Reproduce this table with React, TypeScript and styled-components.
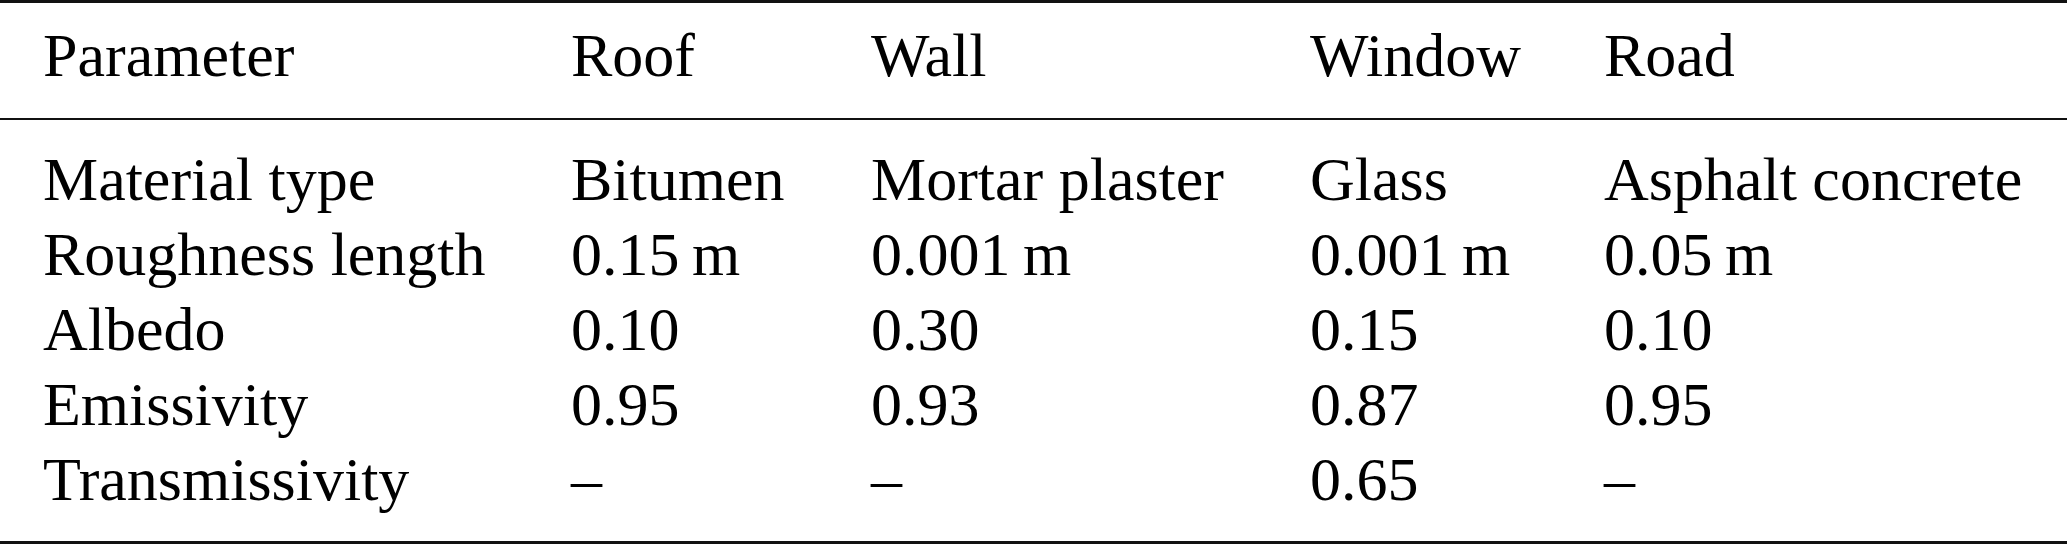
import React from "react";
import styled, { createGlobalStyle } from "styled-components";

const GlobalStyle = createGlobalStyle`
  html, body {
    margin: 0;
    padding: 0;
    background: #ffffff;
  }
`;

type rowType = {
  label: string;
  values: Array<string>;
};

const headers = ["Parameter", "Roof", "Wall", "Window", "Road"];

const rows: Array<rowType> = [
  { label: "Material type", values: ["Bitumen", "Mortar plaster", "Glass", "Asphalt concrete"] },
  { label: "Roughness length", values: ["0.15\u2009m", "0.001\u2009m", "0.001\u2009m", "0.05\u2009m"] },
  { label: "Albedo", values: ["0.10", "0.30", "0.15", "0.10"] },
  { label: "Emissivity", values: ["0.95", "0.93", "0.87", "0.95"] },
  { label: "Transmissivity", values: ["\u2013", "\u2013", "0.65", "\u2013"] },
];

const App = () => {
  return (
    <>
      <GlobalStyle />
      <StyledTable>
        <HeadSection>
          <Row>
            {headers.map((h) => (
              <Cell key={h}>{h}</Cell>
            ))}
          </Row>
        </HeadSection>
        <BodySection>
          {rows.map((r) => (
            <Row key={r.label}>
              <Cell>{r.label}</Cell>
              {r.values.map((v, i) => (
                <Cell key={i}>{v}</Cell>
              ))}
            </Row>
          ))}
        </BodySection>
      </StyledTable>
    </>
  );
};

const StyledTable = styled.div`
  width: 2067px;
  font-family: "Liberation Serif", "Times New Roman", serif;
  font-size: 62px;
  color: #000;
  display: flex;
  flex-direction: column;
`;

const HeadSection = styled.div`
  border-top: 3px solid #111;
  border-bottom: 2px solid #111;
  padding: 15px 0 25px;
`;

const BodySection = styled.div`
  border-bottom: 3px solid #111;
  padding: 22px 0 24px;
`;

const Row = styled.div`
  display: grid;
  grid-template-columns: 528px 300px 439px 294px auto;
  padding-left: 43px;
  line-height: 75px;
`;

const Cell = styled.div`
  white-space: nowrap;
`;

App.displayName = "App";
export default App;
